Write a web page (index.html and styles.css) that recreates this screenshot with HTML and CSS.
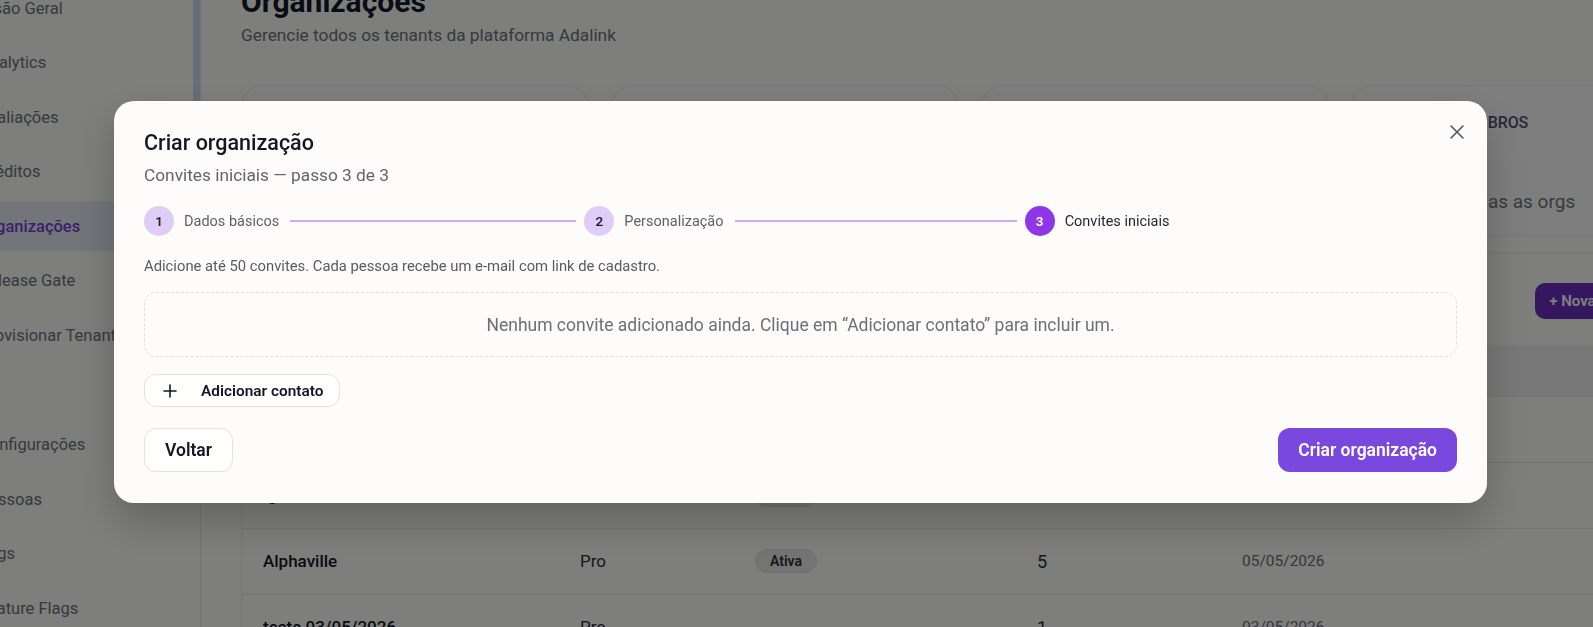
FILE: index.html
```html
<!DOCTYPE html>
<html>
	<head>
		<title>Organizações — Adalink</title>
		<meta charset="utf-8" />
		<link rel="stylesheet" href="styles.css">
	</head>
	<body>

		<div class="app">
			<aside class="sidebar">
				<nav class="nav">
					<a class="nav-item">Visão Geral</a>
					<a class="nav-item">Analytics</a>
					<a class="nav-item">Avaliações</a>
					<a class="nav-item">Créditos</a>
					<a class="nav-item active">Organizações</a>
					<a class="nav-item">Release Gate</a>
					<a class="nav-item">Provisionar Tenant</a>
					<a class="nav-item">IA</a>
					<a class="nav-item">Configurações</a>
					<a class="nav-item">Pessoas</a>
					<a class="nav-item">Logs</a>
					<a class="nav-item">Feature Flags</a>
				</nav>
				<div class="scroll-thumb"></div>
			</aside>

			<main class="main">
				<header class="page-head">
					<h1>Organizações</h1>
					<p>Gerencie todos os tenants da plataforma Adalink</p>
				</header>

				<section class="stats">
					<div class="stat">
						<div class="stat-label">Total de orgs</div>
						<div class="stat-value">14</div>
						<div class="stat-hint">Cadastradas na plataforma</div>
					</div>
					<div class="stat">
						<div class="stat-label">Orgs ativas</div>
						<div class="stat-value">12</div>
						<div class="stat-hint">Com assinatura vigente</div>
					</div>
					<div class="stat">
						<div class="stat-label">Plano Pro</div>
						<div class="stat-value">9</div>
						<div class="stat-hint">Orgs no plano Pro</div>
					</div>
					<div class="stat">
						<div class="stat-label">Total de membros</div>
						<div class="stat-value">48</div>
						<div class="stat-hint">Soma de todas as orgs</div>
					</div>
				</section>

				<section class="table-card">
					<div class="toolbar">
						<input class="search" type="text" placeholder="Buscar organização..." />
						<button class="btn-new">+ Nova organização</button>
					</div>
					<table class="orgs">
						<thead>
							<tr>
								<th class="c-name">Nome</th>
								<th class="c-plan">Plano</th>
								<th class="c-status">Status</th>
								<th class="c-count">Membros</th>
								<th class="c-date">Criada em</th>
							</tr>
						</thead>
						<tbody>
							<tr>
								<td class="name">Adalink Demo</td>
								<td>Enterprise</td>
								<td><span class="badge">Ativa</span></td>
								<td class="count">12</td>
								<td class="date">01/05/2026</td>
							</tr>
							<tr>
								<td class="name">Igor Tech</td>
								<td>Pro</td>
								<td><span class="badge">Ativa</span></td>
								<td class="count">3</td>
								<td class="date">04/05/2026</td>
							</tr>
							<tr>
								<td class="name">Alphaville</td>
								<td>Pro</td>
								<td><span class="badge">Ativa</span></td>
								<td class="count">5</td>
								<td class="date">05/05/2026</td>
							</tr>
							<tr>
								<td class="name">teste 03/05/2026</td>
								<td>Pro</td>
								<td></td>
								<td class="count">1</td>
								<td class="date">03/05/2026</td>
							</tr>
						</tbody>
					</table>
				</section>
			</main>
		</div>

		<div class="overlay">
			<div class="modal">
				<button class="close" aria-label="Fechar">
					<svg width="14" height="14" viewBox="0 0 14 14"><path d="M1 1 L13 13 M13 1 L1 13" stroke="#4b5061" stroke-width="1.5" stroke-linecap="round" fill="none"/></svg>
				</button>

				<h2 class="modal-title">Criar organização</h2>
				<p class="modal-sub">Convites iniciais — passo 3 de 3</p>

				<div class="stepper">
					<div class="step done">
						<span class="step-num">1</span>
						<span class="step-label">Dados básicos</span>
						<span class="step-line"></span>
					</div>
					<div class="step done">
						<span class="step-num">2</span>
						<span class="step-label">Personalização</span>
						<span class="step-line"></span>
					</div>
					<div class="step current">
						<span class="step-num">3</span>
						<span class="step-label">Convites iniciais</span>
					</div>
				</div>

				<p class="helper">Adicione até 50 convites. Cada pessoa recebe um e-mail com link de cadastro.</p>

				<div class="empty">Nenhum convite adicionado ainda. Clique em “Adicionar contato” para incluir um.</div>

				<button class="add-btn">
					<svg width="14" height="14" viewBox="0 0 14 14"><path d="M7 1 V13 M1 7 H13" stroke="#141826" stroke-width="1.6" stroke-linecap="round" fill="none"/></svg>
					Adicionar contato
				</button>

				<div class="modal-foot">
					<button class="btn-outline">Voltar</button>
					<button class="btn-primary">Criar organização</button>
				</div>
			</div>
		</div>

	</body>
</html>
```

FILE: styles.css
```css
* {
	margin: 0;
	padding: 0;
	box-sizing: border-box;
}

html, body {
	height: 100%;
	overflow: hidden;
}

body {
	background: #fcfcfb;
	color: #111827;
	font-family: Roboto, "Open Sans", sans-serif;
}

button, input {
	font-family: inherit;
}

.app {
	display: flex;
	height: 100%;
}

/* sidebar (page is scrolled a bit to the right) */

.sidebar {
	width: 201px;
	flex-shrink: 0;
	border-right: 1px solid #e6e6e6;
	position: relative;
	overflow: hidden;
}

.nav {
	display: flex;
	flex-direction: column;
	gap: 4.6px;
	margin: -17px 10px 0 -21px;
}

.nav-item {
	height: 50px;
	display: flex;
	align-items: center;
	font-size: 16.5px;
	color: #6b7280;
	white-space: nowrap;
	border-radius: 10px;
}

.nav-item.active {
	background: #e8eaf4;
	color: #763ed6;
	font-weight: 500;
}

.scroll-thumb {
	position: absolute;
	top: 0;
	right: 0;
	width: 7px;
	height: 220px;
	background: #d2dbf2;
}

/* main */

.main {
	flex: 1;
	min-width: 0;
	padding-left: 40px;
	margin-top: -16px;
}

.page-head h1 {
	font-size: 30px;
	line-height: 36px;
	font-weight: 700;
	color: #111827;
	margin-bottom: 3px;
}

.page-head p {
	font-size: 17.3px;
	line-height: 24px;
	color: #6b7280;
}

.stats {
	display: grid;
	grid-template-columns: repeat(4, 348px);
	gap: 22px;
	margin-top: 38px;
}

.stat {
	height: 151px;
	border: 1px solid #ebebeb;
	border-radius: 22px;
	padding: 28px 24px 0;
	background: #fdfdfc;
}

.stat-label {
	font-size: 16px;
	line-height: 18px;
	font-weight: 500;
	text-transform: uppercase;
	letter-spacing: -0.1px;
	color: #4d5270;
}

.stat-value {
	font-size: 30px;
	line-height: 40px;
	font-weight: 700;
	margin-top: 9px;
}

.stat-hint {
	font-size: 19px;
	line-height: 22px;
	text-indent: 5px;
	color: #70737d;
	margin-top: 10px;
}

.table-card {
	width: 1477px;
	margin-top: 16px;
	border: 1px solid #e8e8e8;
	border-radius: 20px;
	overflow: hidden;
}

.toolbar {
	display: flex;
	align-items: center;
	justify-content: space-between;
	padding: 30px 21px 26px;
}

.search {
	width: 360px;
	height: 36px;
	border: 1px solid #e6e6e6;
	border-radius: 10px;
	padding: 0 14px;
	font-size: 15px;
	background: #fff;
}

.btn-new {
	height: 36px;
	padding: 0 14px;
	border: none;
	border-radius: 10px;
	background: #6b2fc0;
	color: #fff;
	font-size: 15px;
	font-weight: 600;
}

.orgs {
	width: 100%;
	border-collapse: collapse;
}

.orgs th {
	height: 51px;
	background: #f1f1f0;
	text-align: left;
	font-size: 12px;
	font-weight: 600;
	text-transform: uppercase;
	letter-spacing: 0.5px;
	color: #6b7280;
	padding-left: 21px;
}

.orgs th.c-name { width: 317px; }
.orgs th.c-plan { width: 175px; }
.orgs th.c-status { width: 282px; }
.orgs th.c-count { width: 205px; }

.orgs td {
	height: 66px;
	border-top: 1px solid #e6e6e6;
	padding-left: 21px;
	font-size: 17px;
	color: #2b2f38;
}

.orgs td.name {
	font-weight: 500;
	color: #111827;
}

.orgs td.count {
	font-size: 18px;
}

.orgs td.date {
	font-size: 15.5px;
	color: #6b6f78;
}

.badge {
	display: inline-block;
	padding: 3px 14px;
	border-radius: 999px;
	background: #e9e9e8;
	border: 1px solid #e0e0df;
	font-size: 14px;
	font-weight: 600;
	color: #2b2f38;
}

/* modal */

.overlay {
	position: fixed;
	inset: 0;
	background: rgba(0, 0, 0, 0.5);
	display: flex;
	align-items: flex-start;
	padding: 101px 106px 0 114px;
}

.modal {
	position: relative;
	flex: 1;
	background: #fdfcfb;
	border-radius: 20px;
	padding: 28px 30px 31px;
	box-shadow: 0 18px 40px rgba(0, 0, 0, 0.22);
}

.close {
	position: absolute;
	top: 21px;
	right: 20px;
	width: 20px;
	height: 20px;
	border: none;
	background: none;
	display: flex;
	align-items: center;
	justify-content: center;
}

.modal-title {
	font-size: 21.5px;
	line-height: 28px;
	font-weight: 500;
	color: #141826;
}

.modal-sub {
	font-size: 17.3px;
	line-height: 22px;
	margin-top: 7px;
	color: #62656d;
}

.stepper {
	display: flex;
	gap: 8px;
	margin-top: 20px;
}

.step {
	flex: 1;
	display: flex;
	align-items: center;
}

.step-num {
	width: 30px;
	height: 30px;
	border-radius: 50%;
	display: flex;
	align-items: center;
	justify-content: center;
	font-size: 13.5px;
	font-weight: 600;
	background: #dfcdf7;
	color: #1d2030;
	flex-shrink: 0;
}

.step-label {
	margin-left: 10px;
	font-size: 14.5px;
	color: #5d616b;
	white-space: nowrap;
}

.step-line {
	flex: 1;
	height: 2px;
	margin-left: 11px;
	background: #cdaaf3;
}

.step.current .step-num {
	background: #9036e9;
	color: #fff;
}

.step.current .step-label {
	color: #1f2430;
}

.helper {
	margin-top: 20px;
	font-size: 14.8px;
	line-height: 20px;
	color: #575b65;
}

.empty {
	margin-top: 16px;
	height: 65px;
	border: 1px dashed #e2dfdb;
	border-radius: 12px;
	display: flex;
	align-items: center;
	justify-content: center;
	font-size: 17.5px;
	color: #6b6f78;
}

.add-btn {
	margin-top: 17px;
	height: 33px;
	display: flex;
	align-items: center;
	gap: 24px;
	padding: 0 16px 0 18px;
	border: 1px solid #e4e2df;
	border-radius: 12px;
	background: #fefefd;
	font-size: 15.4px;
	font-weight: 600;
	color: #141826;
}

.modal-foot {
	margin-top: 21px;
	display: flex;
	justify-content: space-between;
}

.btn-outline, .btn-primary {
	height: 44px;
	border-radius: 12px;
	font-size: 17.5px;
	font-weight: 600;
}

.btn-outline {
	padding: 0 20px;
	border: 1px solid #e4e2df;
	background: #fefefd;
	color: #141826;
}

.btn-primary {
	padding: 0 20px;
	border: none;
	background: #7b48df;
	color: #fff;
}
```
